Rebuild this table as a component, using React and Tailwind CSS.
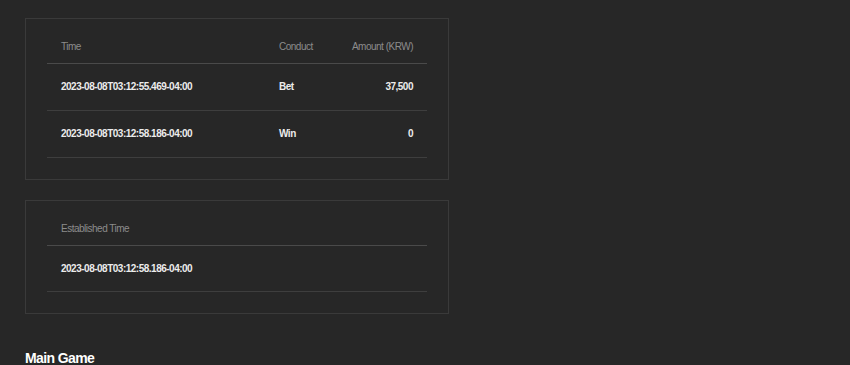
import React from 'react';

const bets = [
    { time: '2023-08-08T03:12:55.469-04:00', conduct: 'Bet', amount: '37,500' },
    { time: '2023-08-08T03:12:58.186-04:00', conduct: 'Win', amount: '0' },
];

const App = () => {
    return (
        <div className="min-h-screen w-full bg-[#272727] font-['Liberation_Sans',Arial,sans-serif] text-[10px] tracking-[-0.5px] overflow-hidden">
            <div className="w-[424px] ml-[25px] pt-[18px] flex flex-col">
                {/* Bet history */}
                <div className="border border-[#3a3a3a] px-[21px] pt-[11px] pb-[21px]">
                    <table className="w-full border-collapse">
                        <thead>
                            <tr className="h-[33px] border-b border-[#4a4a4a] text-[#8c8c8c]">
                                <th className="font-normal text-left px-[14px]">Time</th>
                                <th className="font-normal text-left w-[58px]">Conduct</th>
                                <th className="font-normal text-right pr-[14px] w-[90px]">Amount (KRW)</th>
                            </tr>
                        </thead>
                        <tbody>
                            {bets.map((row) => (
                                <tr key={row.time} className="h-[47px] border-b border-[#3e3e3e] text-[#ececec] font-bold">
                                    <td className="px-[14px]">{row.time}</td>
                                    <td>{row.conduct}</td>
                                    <td className="text-right pr-[14px]">{row.amount}</td>
                                </tr>
                            ))}
                        </tbody>
                    </table>
                </div>

                {/* Established */}
                <div className="mt-[20px] border border-[#3a3a3a] px-[21px] pt-[11px] pb-[21px]">
                    <div className="h-[34px] flex items-center px-[14px] border-b border-[#4a4a4a] text-[#8c8c8c]">
                        Established Time
                    </div>
                    <div className="h-[46px] flex items-center px-[14px] border-b border-[#3e3e3e] text-[#ececec] font-bold">
                        2023-08-08T03:12:58.186-04:00
                    </div>
                </div>

                <h2 className="mt-[37px] text-[14px] tracking-[-0.6px] font-bold text-white leading-none">Main Game</h2>
            </div>
        </div>
    );
};

export default App;
